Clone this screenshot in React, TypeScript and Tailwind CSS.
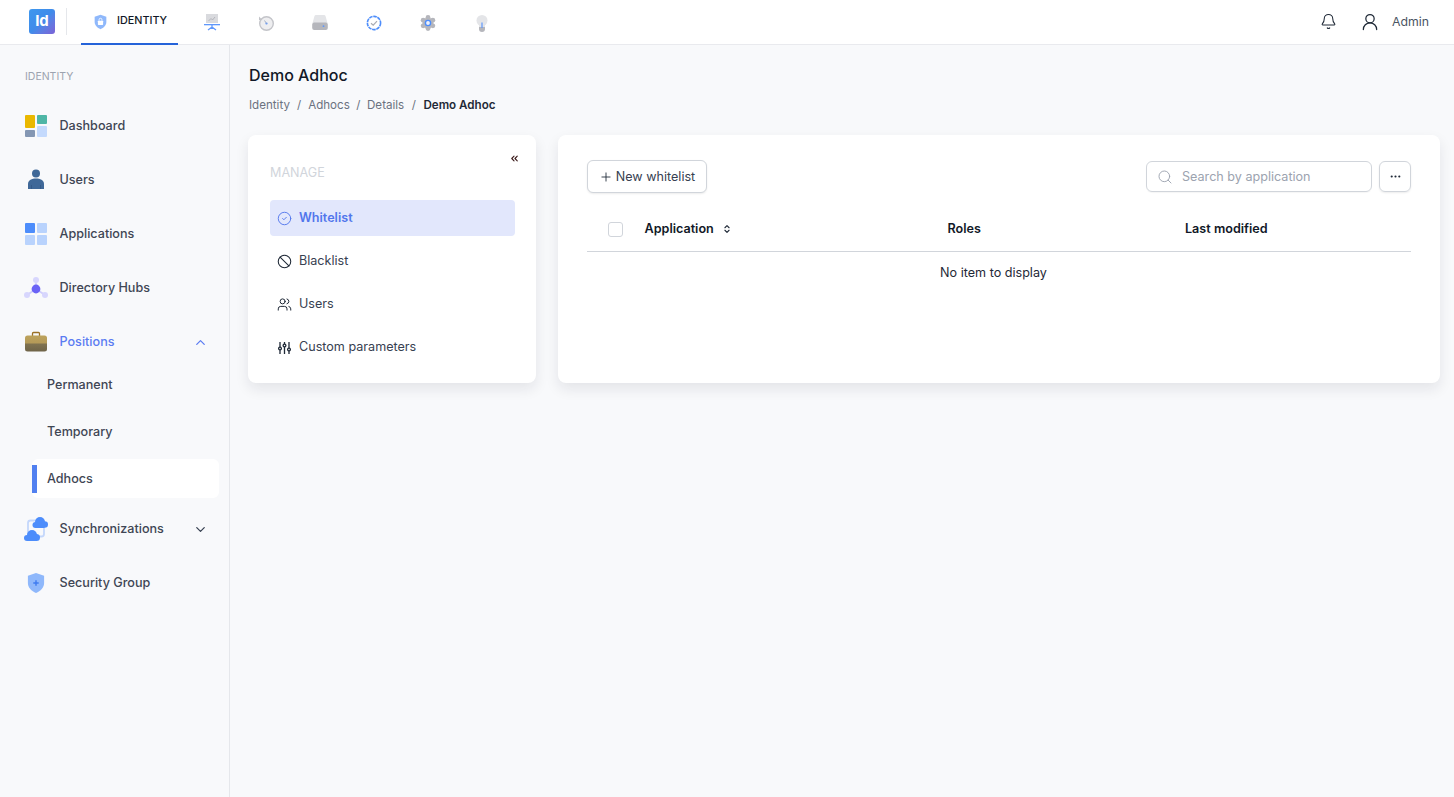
import React from "react";
import { Bell, ChevronDown, ChevronUp, ChevronsLeft, CircleCheck, Ban, Users, Plus, Search, Ellipsis, ChevronsUpDown, UserRound } from "lucide-react";

const Shield = ({ plus, w, h }: { plus?: boolean; w: number; h: number }) => (
  <svg width={w} height={h} viewBox="0 0 20 24">
    <path d="M10 1 L19 4 V12 C19 17 15 21 10 23 C5 21 1 17 1 12 V4 Z" fill="#8fb8fb" />
    {plus ? (
      <path d="M10 9 V15 M7 12 H13" stroke="#3f7cf0" strokeWidth="1.6" />
    ) : (
      <g>
        <rect x="6" y="10" width="8" height="6.5" rx="1" fill="#fff" />
        <path d="M7.8 10 V8.5 a2.2 2.2 0 0 1 4.4 0 V10" stroke="#fff" strokeWidth="1.3" fill="none" />
      </g>
    )}
  </svg>
);

const DashIcon = () => (
  <svg width="22" height="22" viewBox="0 0 22 22">
    <rect x="0" y="0" width="10" height="13" rx="1" fill="#eab800" />
    <rect x="12" y="0" width="10" height="9" rx="1" fill="#4fb6a6" />
    <rect x="0" y="15" width="10" height="7" rx="1" fill="#8497b3" />
    <rect x="12" y="11" width="10" height="11" rx="1" fill="#c4dafd" />
  </svg>
);
const UserIcon = () => (
  <svg width="22" height="22" viewBox="0 0 22 22">
    <circle cx="11" cy="4.5" r="4" fill="#3f6898" />
    <path d="M3 20 V15 C3 11 7 9.5 11 9.5 C15 9.5 19 11 19 15 V20 Z" fill="#3f6898" />
    <path d="M6.5 16 V20 M15.5 16 V20" stroke="#2f5583" strokeWidth="0.7" />
  </svg>
);
const AppsIcon = () => (
  <svg width="22" height="22" viewBox="0 0 22 22">
    <rect x="0" y="0" width="10" height="10" rx="1" fill="#4d8dfb" />
    <rect x="12" y="0" width="10" height="10" rx="1" fill="#b9d3fd" />
    <rect x="0" y="12" width="10" height="10" rx="1" fill="#b9d3fd" />
    <rect x="12" y="12" width="10" height="10" rx="1" fill="#b9d3fd" />
  </svg>
);
const HubIcon = () => (
  <svg width="24" height="22" viewBox="0 0 24 22">
    <path d="M12 3 V12 L3 18 M12 12 L21 18" stroke="#cfcdfc" strokeWidth="1.6" fill="none" />
    <circle cx="12" cy="3" r="3" fill="#d7d6fd" />
    <circle cx="3" cy="18" r="3" fill="#d7d6fd" />
    <circle cx="21" cy="18" r="3" fill="#d7d6fd" />
    <circle cx="12" cy="12" r="4.4" fill="#6a63f6" />
  </svg>
);
const CaseIcon = () => (
  <svg width="22" height="22" viewBox="0 0 22 22">
    <path d="M7.5 5 V2.5 a1 1 0 0 1 1-1 h5 a1 1 0 0 1 1 1 V5" stroke="#9a7126" strokeWidth="1.3" fill="none" />
    <defs>
      <linearGradient id="case" x1="0" y1="0" x2="0" y2="1">
        <stop offset="0" stopColor="#bda35c" />
        <stop offset="0.45" stopColor="#b59a58" />
        <stop offset="0.55" stopColor="#7f7250" />
        <stop offset="1" stopColor="#6f6448" />
      </linearGradient>
    </defs>
    <rect x="0" y="4.5" width="22" height="16" rx="2.5" fill="url(#case)" />
  </svg>
);
const SyncIcon = () => (
  <svg width="24" height="24" viewBox="0 0 24 24">
    <rect x="4" y="3.5" width="16" height="16" rx="2.5" fill="none" stroke="#c4d7fb" strokeWidth="1.8" />
    <g fill="#4d8dfb">
      <circle cx="16" cy="5" r="5" />
      <circle cx="20.7" cy="7.5" r="3.3" />
      <circle cx="11.5" cy="8" r="3" />
      <rect x="11.5" y="6" width="9" height="5" />
      <circle cx="8" cy="18" r="5" />
      <circle cx="3" cy="21" r="3" />
      <circle cx="12.5" cy="20.5" r="3.5" />
      <rect x="3" y="19" width="10" height="5" />
    </g>
  </svg>
);
const SlidersIcon = () => (
  <svg width="15" height="15" viewBox="0 0 15 15" fill="none" stroke="currentColor" strokeWidth="1.3">
    <path d="M3 2 V7 M3 10 V14 M7.5 2 V4 M7.5 7 V14 M12 2 V8 M12 11 V14" />
    <circle cx="3" cy="8.5" r="1.4" />
    <circle cx="7.5" cy="5.5" r="1.4" />
    <circle cx="12" cy="9.5" r="1.4" />
  </svg>
);

const Nav = ({ icon, label, active, chev }: { icon: React.ReactNode; label: string; active?: boolean; chev?: "up" | "down" }) => (
  <div className="flex items-center pl-6 pr-[21px] h-[54px]">
    <div className="w-[24px] flex items-center justify-center shrink-0">{icon}</div>
    <span className={`ml-[11.5px] font-medium flex-1 ${active ? "text-[#5b7cf2]" : "text-[#3f4654]"}`}>{label}</span>
    {chev === "up" && <ChevronUp size={15} className="text-[#5b7cf2]" />}
    {chev === "down" && <ChevronDown size={15} className="text-[#374151]" />}
  </div>
);

const gearLobes = [0, 60, 120, 180, 240, 300];
const TabIcons = [
  <svg key="0" width="18" height="18" viewBox="0 0 18 18">
    <rect x="3" y="0" width="12" height="9" fill="#d9dade" />
    <path d="M5.5 7 L8 4.5 L9.5 6 L12 3" stroke="#a9abb2" strokeWidth="0.8" fill="none" />
    <rect x="1" y="10" width="16" height="1.3" fill="#5f97fb" />
    <path d="M9 11 V15 M5 16 L9 13 L13 16" stroke="#5f97fb" strokeWidth="1.3" fill="none" />
  </svg>,
  <svg key="1" width="18" height="18" viewBox="0 0 18 18">
    <circle cx="9.5" cy="9.5" r="6.8" fill="#eeeef0" stroke="#c3c4c9" strokeWidth="1.4" />
    <path d="M2 2.5 V6 H5.5 Z" fill="#c3c4c9" />
    <circle cx="9.5" cy="9.5" r="1.1" fill="#5f97fb" />
    <path d="M7.5 6.5 L9.5 9.5" stroke="#9da9c0" strokeWidth="0.9" />
  </svg>,
  <svg key="2" width="18" height="18" viewBox="0 0 18 18">
    <path d="M3.5 2 a1.5 1.5 0 0 1 1.5-1 h8 a1.5 1.5 0 0 1 1.5 1 L16.5 9 H1.5 Z" fill="#e4e5e8" />
    <rect x="1.2" y="8.5" width="15.6" height="7.5" rx="2" fill="#b5b6bc" />
    <circle cx="12.5" cy="12.2" r="0.9" fill="#5f97fb" />
  </svg>,
  <svg key="3" width="18" height="18" viewBox="0 0 18 18">
    <circle cx="9" cy="9" r="6.6" fill="#fff" stroke="#4d8dfb" strokeWidth="1.6" strokeDasharray="3.6 0.7" />
    <path d="M6 9.2 L8.2 11.2 L12 7.2" stroke="#a9abb2" strokeWidth="1.2" fill="none" />
  </svg>,
  <svg key="4" width="18" height="18" viewBox="0 0 18 18">
    {gearLobes.map((a) => (
      <circle key={a} cx={9 + 5.6 * Math.cos((a * Math.PI) / 180 + Math.PI / 2)} cy={9 + 5.6 * Math.sin((a * Math.PI) / 180 + Math.PI / 2)} r="2.4" fill="#b5b6bc" />
    ))}
    <circle cx="9" cy="9" r="5.6" fill="#b5b6bc" />
    <circle cx="9" cy="9" r="2.6" fill="#eef1f8" stroke="#4d8dfb" strokeWidth="1.4" />
  </svg>,
  <svg key="5" width="18" height="18" viewBox="0 0 18 18">
    <circle cx="9" cy="6.5" r="5.5" fill="#e4e5e8" />
    <rect x="6" y="11" width="6" height="2" fill="#e4e5e8" />
    <path d="M6 13 H12 V15 a3 3 0 0 1-6 0Z" fill="#b5b6bc" />
    <path d="M9 8.5 V14" stroke="#5f97fb" strokeWidth="1.2" />
  </svg>,
];

const subRows = (
  <div className="pl-[32px] pr-[10px] -mt-[7px] font-medium text-[#3f4654]">
    <div className="h-[47px] flex items-center pl-[15px]">Permanent</div>
    <div className="h-[47px] flex items-center pl-[15px]">Temporary</div>
    <div className="h-[47px] flex items-center">
      <div className="h-[39px] -mt-[2px] w-full flex items-center bg-white rounded-[6px] relative pl-[15px]">
        <span className="absolute left-0 top-[6px] h-[28px] w-[5px] bg-[#5180f0]" />
        <span className="mt-[2px]">Adhocs</span>
      </div>
    </div>
  </div>
);

export default function App() {
  return (
    <div className="h-[797px] w-full flex flex-col bg-[#f8f9fb] overflow-hidden text-[12.6px] text-[#111827] font-['Inter',sans-serif]">
      <header className="h-[45px] shrink-0 bg-white border-b border-[#e9eaee] flex items-stretch pl-[29px] pr-[25px]">
        <div className="flex items-center h-[44px] pb-[1px]">
          <div className="w-[26px] h-[25px] rounded-[3px] bg-gradient-to-br from-[#3f98ee] via-[#3f8bea] to-[#7a62d6] text-white font-bold text-[15px] flex items-center justify-center">Id</div>
          <div className="w-px h-[27px] bg-[#e5e7eb] ml-[11px]" />
        </div>
        <div className="ml-[14px] w-[97px] h-[45px] border-b-2 border-[#2563d9] flex items-center pl-[13px]">
          <Shield w={13} h={16} />
          <span className="ml-[10px] text-[10.8px] font-medium text-[#111827]">IDENTITY</span>
        </div>
        <div className="flex items-center ml-[25px] gap-[36px] pt-[1px]">
          {TabIcons.map((i) => i)}
        </div>
        <div className="ml-auto flex items-center pb-[1px]">
          <Bell size={17} strokeWidth={1.5} className="text-[#1f2937]" />
          <UserRound size={20} strokeWidth={1.5} className="text-[#1f2937] ml-[23px]" />
          <span className="ml-[12px] text-[12.3px] mt-[1px] text-[#4b5563]">Admin</span>
        </div>
      </header>
      <div className="flex flex-1 min-h-0">
        <aside className="w-[230px] shrink-0 border-r border-[#e5e7eb] pt-[25px]">
          <div className="pl-[25px] text-[10.5px] text-[#9ca3af] leading-[14px]">IDENTITY</div>
          <div className="mt-[15px]">
            <Nav icon={<DashIcon />} label="Dashboard" />
            <Nav icon={<UserIcon />} label="Users" />
            <Nav icon={<AppsIcon />} label="Applications" />
            <Nav icon={<HubIcon />} label="Directory Hubs" />
            <Nav icon={<CaseIcon />} label="Positions" active chev="up" />
            {subRows}
            <div className="-mt-[1px]">
              <Nav icon={<SyncIcon />} label="Synchronizations" chev="down" />
            </div>
            <Nav icon={<Shield plus w={18} h={22} />} label="Security Group" />
          </div>
        </aside>
        <main className="flex-1 min-w-0 pl-[18px] pr-[14px] pt-[19px]">
          <h1 className="pl-[1px] text-[16px] font-medium leading-[22px] text-[#111827]">Demo Adhoc</h1>
          <div className="flex items-center pl-[1px] mt-[12px] text-[11.6px] leading-[14px] text-[#6b7280]">
            <span>Identity</span><span className="mx-[7px]">/</span>
            <span>Adhocs</span><span className="mx-[6.5px]">/</span>
            <span>Details</span><span className="ml-[7.5px] mr-[7.5px]">/</span>
            <span className="font-semibold text-[#1f2937]">Demo Adhoc</span>
          </div>
          <div className="flex gap-[22px] mt-[23px] items-stretch">
            <div className="w-[288px] h-[248px] shrink-0 bg-white rounded-[8px] shadow-[0_6px_14px_rgba(17,24,39,0.09)] pl-[22px] pr-[21px] relative">
              <ChevronsLeft size={11} strokeWidth={2.4} className="absolute right-[16px] top-[18px] text-[#3b1a1a]" />
              <div className="pt-[30px] text-[#d1d5db] leading-[16px]">MANAGE</div>
              <div className="mt-[19px] flex flex-col">
                <div className="h-[36px] flex items-center rounded-[4px] bg-[#e2e7fc] text-[#5276ec] font-semibold pl-[7px]">
                  <CircleCheck size={15} strokeWidth={1.5} className="mt-[1px]" /><span className="ml-[7px]">Whitelist</span>
                </div>
                {[
                  [<Ban key="b" size={15} strokeWidth={1.7} />, "Blacklist"],
                  [<Users key="u" size={15} strokeWidth={1.6} />, "Users"],
                  [<SlidersIcon key="s" />, "Custom parameters"],
                ].map(([icon, label], i) => (
                  <div key={i} className="h-[36px] mt-[7px] flex items-center text-[#374151] pl-[7px]">
                    <span className="mt-[1px] text-[#1f2937]">{icon}</span><span className="ml-[7px]">{label}</span>
                  </div>
                ))}
              </div>
            </div>
            <div className="flex-1 h-[248px] bg-white rounded-[8px] shadow-[0_6px_14px_rgba(17,24,39,0.09)] pl-[29px] pr-[29px] pt-[25px]">
              <div className="flex items-center h-[33px]">
                <button className="w-[120px] h-[33px] border border-[#d1d5db] rounded-[6px] shadow-[0_1px_2px_rgba(0,0,0,0.08)] flex items-center justify-center text-[#374151] bg-white">
                  <Plus size={14} strokeWidth={1.5} className="mr-[3px] text-[#1f2937]" /><span className="mt-[1px]">New whitelist</span>
                </button>
                <div className="ml-auto w-[226px] h-[31px] border border-[#d1d5db] rounded-[6px] flex items-center pl-[10px] shadow-[0_1px_1px_rgba(0,0,0,0.04)]">
                  <Search size={16} strokeWidth={1.4} className="text-[#9ca3af]" />
                  <span className="ml-[9px] mt-[1px] text-[#9ca3af]">Search by application</span>
                </div>
                <button className="ml-[7px] w-[32px] h-[31px] border border-[#d1d5db] rounded-[6px] shadow-[0_1px_2px_rgba(0,0,0,0.08)] flex items-center justify-center">
                  <Ellipsis size={13} strokeWidth={2} className="text-[#1f2937]" />
                </button>
              </div>
              <div className="flex items-center h-[59px] pt-[15px] border-b border-[#d1d5db] font-semibold text-[#111827]">
                <div className="w-[15px] h-[15px] ml-[21px] border border-[#d1d5db] rounded-[3px]" />
                <div className="w-[303px] ml-[21.5px] flex items-center">Application<ChevronsUpDown size={10} strokeWidth={2.6} className="ml-[8px] text-[#1f2937]" /></div>
                <div className="w-[237.5px]">Roles</div>
                <div>Last modified</div>
              </div>
              <div className="text-center mt-[12px] pr-[11px] text-[#1f2937] leading-[18px]">No item to display</div>
            </div>
          </div>
        </main>
      </div>
    </div>
  );
}
